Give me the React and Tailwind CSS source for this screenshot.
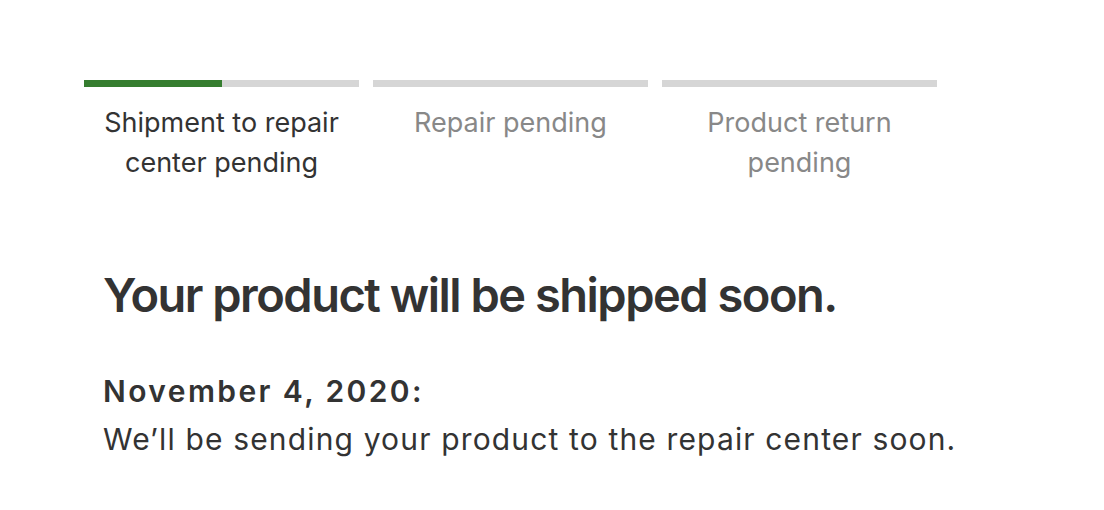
const steps = [
  { label: "Shipment to repair center pending", progress: 50, active: true },
  { label: "Repair pending", progress: 0, active: false },
  { label: "Product return pending", progress: 0, active: false },
];

export default function App() {
  return (
    <div
      className="w-[1104px] h-[510px] bg-white pl-[84px] pt-[80px]"
      style={{ fontFamily: "Inter, 'Noto Sans', sans-serif" }}
    >
      {/* Progress tracker */}
      <div className="flex gap-[14px]">
        {steps.map((step) => (
          <div key={step.label} className="w-[275px] flex flex-col items-center">
            <div className="w-full h-[7px] bg-[#d6d6d6]">
              <div className="h-full bg-[#357d2f]" style={{ width: `${step.progress}%` }} />
            </div>
            <p
              className={
                "mt-[16px] px-[14px] text-center text-[27px] leading-[40px] " +
                (step.active ? "text-[#333333]" : "text-[#888888]")
              }
            >
              {step.label}
            </p>
          </div>
        ))}
      </div>

      {/* Status */}
      <div className="pl-[19px] mt-[84px] text-[#333333]">
        <h1 className="text-[47px] leading-[56px] font-semibold tracking-[-1.5px]">
          Your product will be shipped soon.
        </h1>
        <p className="mt-[48px] text-[30px] leading-[40px] font-semibold tracking-[2.4px]">
          November 4, 2020:
        </p>
        <p className="mt-[8px] text-[30px] leading-[40px] tracking-[1.15px]">
          We’ll be sending your product to the repair center soon.
        </p>
      </div>
    </div>
  );
}
